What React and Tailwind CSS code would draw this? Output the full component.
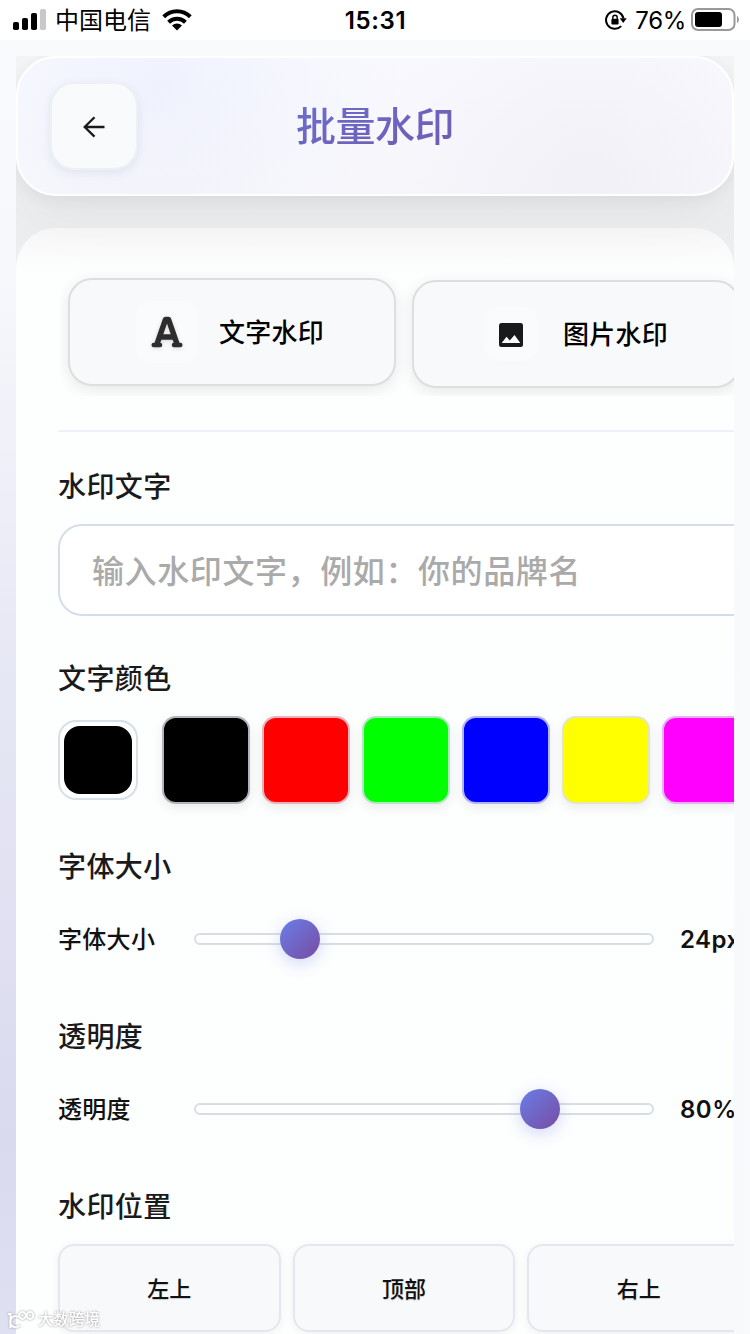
import React, { useState } from 'react';

const COLORS = ['#000000', '#ff0000', '#00ff00', '#0000ff', '#ffff00', '#ff00ff'];
const POSITIONS = ['左上', '顶部', '右上'];

const StatusBar = () => (
  <div className="flex h-10 shrink-0 items-center bg-white pl-[13px] pr-[10px] text-black">
    <div className="flex flex-1 items-center">
      <svg width="34" height="24" viewBox="0 0 34 24">
        <rect x="0" y="14" width="6" height="8" rx="1.8" />
        <rect x="9" y="10" width="6" height="12" rx="1.8" />
        <rect x="18" y="5" width="6" height="17" rx="1.8" />
        <rect x="27" y="1" width="6" height="21" rx="1.8" fill="#c8c8c8" />
      </svg>
      <span className="ml-2 pt-[2px] text-[24px] leading-8">中国电信</span>
      <svg className="ml-[11px]" width="30" height="22" viewBox="0 0 30 22">
        <g fill="none" stroke="#000" strokeWidth="4">
          <path d="M1.7 7.8A19 19 0 0 1 28.3 7.8" />
          <path d="M6.6 13.2A12 12 0 0 1 23.4 13.2" />
        </g>
        <path d="M10 16.5A7.2 7.2 0 0 1 20 16.5L15 21.6Z" />
      </svg>
    </div>
    <span className="-ml-[2px] pt-[2px] text-[24px] font-semibold leading-8 tracking-[0.6px]">15:31</span>
    <div className="flex flex-1 items-center justify-end">
      <svg className="mr-2" width="22" height="20" viewBox="0 0 22 20">
        <path d="M18.5 8.4A8.8 8.8 0 1 0 16.2 16.1" fill="none" stroke="#000" strokeWidth="2" />
        <path d="M14.7 8.2H21.8L18.2 13Z" />
        <rect x="6.4" y="8.8" width="7.2" height="5.8" rx="1" />
        <path d="M7.8 9V7.4A2.2 2.2 0 0 1 12.2 7.4V9" fill="none" stroke="#000" strokeWidth="1.4" />
      </svg>
      <span className="mr-[5px] pt-[2px] text-[24px] leading-8 tracking-[-0.3px]">76%</span>
      <svg width="49" height="24" viewBox="0 0 49 24">
        <rect x="1" y="1" width="42.500" height="21" rx="6" fill="none" stroke="#999" strokeWidth="2" />
        <rect x="4" y="4" width="27" height="15" rx="3" />
        <path d="M46 8C48.500 9 48.500 14 46 15Z" fill="#999" />
      </svg>
    </div>
  </div>
);

const Header = () => (
  <header className="relative flex h-[140px] shrink-0 items-center justify-center rounded-[40px] border-2 border-white bg-[radial-gradient(circle_at_20%_20%,rgba(102,126,234,0.07),transparent_42%),radial-gradient(circle_at_80%_80%,rgba(118,75,162,0.05),transparent_50%),linear-gradient(#fafbff,#f9f9fc)] shadow-[0_16px_64px_rgba(0,0,0,0.06),0_4px_16px_rgba(0,0,0,0.05)]">
    <button
      type="button"
      className="absolute left-8 top-[24px] flex size-[88px] items-center justify-center rounded-3xl border-2 border-[#edf0f5] bg-[#f8fafc] shadow-[0_3px_10px_rgba(90,105,150,0.12)]"
    >
      <svg width="24" height="24" viewBox="0 0 24 24" fill="none" stroke="#1a1a1a" strokeWidth="2.3">
        <path d="M22.500 13H3M12.500 3.200L2.700 13L12.500 22.600" />
      </svg>
    </button>
    <h1 className="bg-gradient-to-br from-[#6a6fd0] to-[#7059ae] bg-clip-text px-[1px] pt-[2px] text-[40px] font-medium leading-[56px] tracking-[-0.5px] text-transparent">
      批量水印
    </h1>
  </header>
);

const SliderRow = ({ label, percent, value }) => (
  <div className="flex h-10 items-center">
    <span className="w-[136px] shrink-0 pt-[2px] text-[24px] font-medium leading-10 tracking-[0.3px] text-[#111]">{label}</span>
    <div className="relative h-3 w-[460px] shrink-0 rounded-full border-2 border-[#d8dee5] bg-white">
      <div
        className="absolute top-1/2 size-10 -translate-x-1/2 -translate-y-1/2 rounded-full bg-gradient-to-br from-[#667eea] to-[#764ba2] shadow-[0_4px_16px_rgba(102,126,234,0.3)]"
        style={{ left: `${percent}%` }}
      />
    </div>
    <span className="ml-[26px] shrink-0 pt-[2px] text-[24px] font-semibold leading-10 tracking-[0.5px] text-[#111]">{value}</span>
  </div>
);

const FieldLabel = ({ children }) => (
  <h2 className="h-10 pt-[1px] text-[28px] font-medium leading-10 tracking-[0.4px] text-[#1a1a1a]">{children}</h2>
);

const App = () => {
  const [text, setText] = useState('');

  return (
    <div lang="zh-CN" className="relative flex h-[1334px] w-[750px] flex-col overflow-hidden font-[Inter,'Noto_Sans_CJK_SC',sans-serif]">
      <StatusBar />
      <main className="flex min-h-0 flex-1 flex-col bg-[linear-gradient(90deg,transparent_50%,#f8fafc),linear-gradient(180deg,#f8fafc_0%,#f7f8fc_18%,#e8e9f5_45%,#dadaef_85%,#dfe0f2_100%)] px-4 pt-4">
        <div className="flex min-h-0 flex-1 flex-col gap-8 overflow-hidden bg-[linear-gradient(#f5f6f7,#edeeef_172px)]">
          <Header />

          <section className="min-h-0 w-[718px] flex-1 overflow-hidden rounded-t-[40px] bg-[linear-gradient(#f8f8f8,#fdfefe_48px)] pl-[42px]">
            {/* Tipo de marca d'água */}
            <div className="mt-11 ml-[2px] flex h-[124px] items-start gap-4 overflow-hidden pl-2 pt-[6px]">
              <button type="button" className="flex h-[108px] w-[328px] shrink-0 items-center justify-center gap-[21px] rounded-3xl border-2 border-[#dcdee0] bg-[#f8f9fb] pr-1 shadow-[0_4px_16px_rgba(0,0,0,0.09)]">
                <span className="flex size-[62px] items-center justify-center rounded-2xl bg-[#fafbfc]">
                  <svg className="drop-shadow-sm" width="32" height="34" viewBox="0 0 32 34" fill="none" stroke="#2d2d2d" strokeLinejoin="round" strokeLinecap="round">
                    <path d="M6 29L14.500 4.500H17.500L26 29M9.500 22H22.500" strokeWidth="5.400" />
                    <path d="M2.700 30H9M23 30H29.300" strokeWidth="4.500" />
                  </svg>
                </span>
                <span className="pt-[2px] text-[26px] font-medium leading-10 tracking-[0.3px] text-black">文字水印</span>
              </button>
              <button type="button" className="mt-[2px] flex h-[108px] w-[328px] shrink-0 items-center justify-center gap-[25px] rounded-3xl border-2 border-[#dcdee0] bg-[#f8f9fb] shadow-[0_4px_16px_rgba(0,0,0,0.09)]">
                <span className="flex size-[54px] items-center justify-center rounded-2xl bg-[#fafbfc] pt-[2px]">
                  <svg width="24" height="24" viewBox="0 0 24 24">
                    <rect width="24" height="24" rx="2.500" fill="#1a1a1a" />
                    <path d="M2.700 20L7.500 13.800L10.800 17.500L15.500 12L21.300 20Z" fill="#fff" />
                  </svg>
                </span>
                <span className="pt-[2px] text-[26px] font-medium leading-10 tracking-[0.3px] text-black">图片水印</span>
              </button>
            </div>

            <div className="mt-[34px] h-[2px] bg-[#eef0f7]" />

            {/* Texto */}
            <div className="mt-[34px]">
              <FieldLabel>水印文字</FieldLabel>
              <input
                type="text"
                value={text}
                onChange={(e) => setText(e.target.value)}
                placeholder="输入水印文字，例如：你的品牌名"
                className="mt-[18px] block h-[92px] w-[700px] rounded-3xl border-2 border-[#d5dde7] bg-white px-8 pt-[2px] text-[32px] font-medium tracking-[0.6px] text-[#1a1a1a] outline-none placeholder:text-[#aaaaaa]"
              />
            </div>

            {/* Cores */}
            <div className="mt-[42px]">
              <FieldLabel>文字颜色</FieldLabel>
              <div className="mt-[18px] flex h-[88px] items-center">
                <div className="size-20 shrink-0 rounded-[18px] border-2 border-[#d8dfe7] bg-white p-1">
                  <div className="size-[68px] rounded-2xl bg-black" />
                </div>
                <div className="ml-6 flex gap-3">
                  {COLORS.map((color) => (
                    <button
                      key={color}
                      type="button"
                      className="size-[88px] shrink-0 rounded-[14px] border-2 border-[#dfe0ee]/80 shadow-[0_4px_12px_rgba(0,0,0,0.08)]"
                      style={{ backgroundColor: color }}
                    />
                  ))}
                </div>
              </div>
            </div>

            {/* Tamanho da fonte */}
            <div className="mt-[42px]">
              <FieldLabel>字体大小</FieldLabel>
              <div className="mt-[33px]">
                <SliderRow label="字体大小" percent={22.7} value="24px" />
              </div>
            </div>

            {/* Opacidade */}
            <div className="mt-[57px]">
              <FieldLabel>透明度</FieldLabel>
              <div className="mt-[33px]">
                <SliderRow label="透明度" percent={75.5} value="80%" />
              </div>
            </div>

            {/* Posição */}
            <div className="mt-[57px]">
              <FieldLabel>水印位置</FieldLabel>
              <div className="mt-[18px] flex gap-3">
                {POSITIONS.map((position) => (
                  <button
                    key={position}
                    type="button"
                    className="h-[88px] w-[222.67px] shrink-0 rounded-2xl border-2 border-[#e4e8ee] bg-[#f8f9fb] pt-[2px] text-[22px] font-medium text-[#111] shadow-[0_2px_10px_rgba(0,0,0,0.06)] text-shadow-xs"
                  >
                    {position}
                  </button>
                ))}
              </div>
            </div>
          </section>
        </div>
      </main>

      {/* Selo sobre o conteúdo */}
      <div className="absolute bottom-[4px] left-[7px] flex items-center gap-[2px] text-white drop-shadow-[0_0_1px_#999]">
        <svg width="29" height="20" viewBox="0 0 29 20" fill="none" stroke="#fff" strokeWidth="2">
          <path d="M1 4H3.500V18M11.500 7A5.500 5.500 0 1 0 13 15" />
          <circle cx="15.500" cy="5.500" r="3.400" />
          <circle cx="23" cy="5.500" r="3.400" />
        </svg>
        <span className="text-[15.5px] font-medium leading-5">大数跨境</span>
      </div>
    </div>
  );
};

export default App;
